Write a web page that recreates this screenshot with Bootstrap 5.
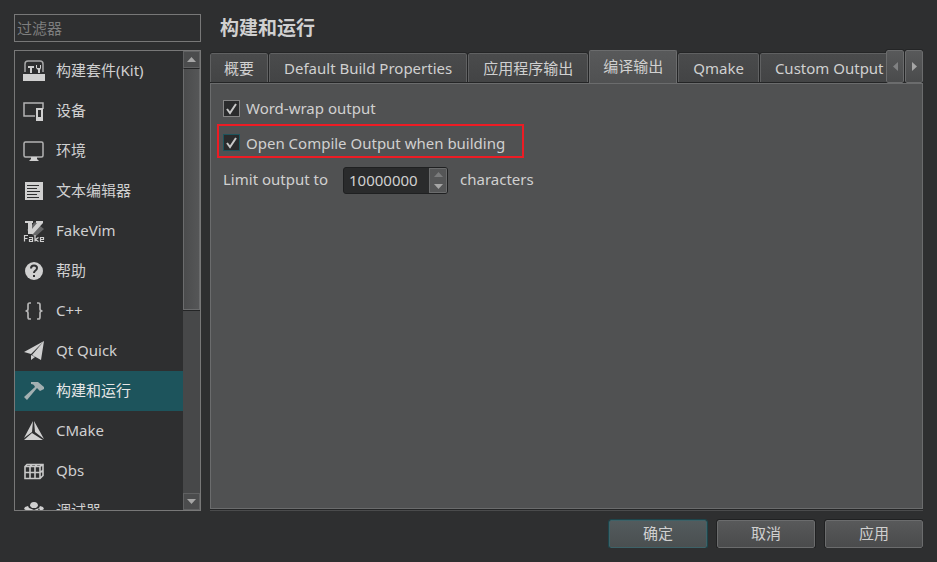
<!DOCTYPE html>
<html lang="zh-CN">
<head>
<meta charset="utf-8">
<meta name="viewport" content="width=device-width, initial-scale=1">
<title>构建和运行</title>
<link href="https://cdn.jsdelivr.net/npm/bootstrap@5.3.0/dist/css/bootstrap.min.css" rel="stylesheet">
<style>
:root { --ink: #d0d0d0; --edge: #6b6c6d; --dark: #242526; }
body { background: #2e2f30; color: var(--ink); font: 15px/20px "Noto Sans", "Noto Sans CJK SC", sans-serif; }
.prefs { padding: 14px; gap: 9px; }
.side { width: 187px; padding-bottom: 37px; }
.filter { height: 28px; padding: 0 2px; background: #2e2f30; border: 1px solid #787878; border-radius: 0; color: var(--ink); font-size: 15px; }
.filter:focus { background: #2e2f30; color: var(--ink); box-shadow: none; border-color: #1d545c; }
.filter::placeholder { color: #7e7e7e; }
.cats { border: 1px solid #787878; }
.cat { height: 40px; padding: 0 8px; gap: 11px; color: var(--ink); text-decoration: none; white-space: nowrap; }
.cat span { padding-bottom: 2px; }
.cat:hover { color: #fff; }
.cat.active { background: #1d545c; color: #e6e6e6; }
.cat svg { width: 22px; height: 22px; fill: #d0d0d0; }
.cat.active svg { fill: #a3b0b2; }
.scroller { width: 17px; background: #474849; }
.scroller button { height: 17px; padding: 0; background: #4b4c4d; border: 1px solid #606162; }
.scroller .thumb { height: 57%; background: linear-gradient(90deg, #4b4c4d, #555657); border: 1px solid #6b6c6d; border-top-color: var(--dark); box-shadow: 0 1px var(--dark); }
.arrow { display: block; margin: auto; fill: #a6a6a6; }
h1 { font-size: 19px; line-height: 28px; font-weight: 700; margin: 0 0 8px; padding-left: 10px; }
.tabs { height: 33px; margin-bottom: -1px; position: relative; border: 0; }
.tabs .nav-link { flex: none; height: 29px; padding: 0 14px; margin: 0 0 1px; background: linear-gradient(#4a4b4c, #434445); color: var(--ink); border: 1px solid #606162; border-bottom: 0; border-radius: 2px 2px 0 0; outline: 1px solid var(--dark); outline-offset: 0; font-size: 15px; line-height: 20px; white-space: nowrap; }
.tabs .nav-item + .nav-item { margin-left: 1px; }
.tabs .nav-item:first-child .nav-link { padding: 0 13px; }
.tabs .nav-link.active { height: 33px; margin: 0; padding: 0 13px 2px; background: linear-gradient(#58595a, #505152); color: var(--ink); outline: 0; border-color: #6b6c6d; }
.tab-arrows button { width: 18px; height: 33px; padding: 0; background: linear-gradient(#58595a, #4a4b4c); border: 1px solid #6b6c6d; border-radius: 2px; outline: 1px solid var(--dark); }
.tab-arrows { gap: 1px; }
.pane { background: #505152; border: 1px solid var(--edge); padding: 11px 12px; margin-bottom: 3px; box-shadow: 0 1px var(--dark), 0 2px #4a4b4c; }
.option { height: 26px; gap: 6px; }
.option .form-check-input { width: 17px; height: 17px; margin: 0; border: 1px solid #858585; border-radius: 0; background-color: #2a2b2c; }
.option .form-check-input:checked { background-color: #2a2b2c; background-size: 15px 15px; background-image: url("data:image/svg+xml,%3Csvg xmlns='http://www.w3.org/2000/svg' viewBox='0 0 15 15'%3E%3Cpath d='M3 8l3 4L12 3' fill='none' stroke='%23c8c8c8' stroke-width='2'/%3E%3C/svg%3E"); }
.option.marked { align-self: flex-start; height: 34px; margin: 3px 0 9px -6px; padding: 3px 17px 0 4px; border: 2px solid #ed1c24; }
.option.marked .form-check-input { border-color: #1d545c; }
.limit > label, .limit > span { padding-bottom: 3px; }
.spin { width: 105px; height: 27px; margin: 0 12px 0 15px; background: #2a2b2c; border: 1px solid #1f2021; border-radius: 3px; overflow: hidden; }
.spin input { min-width: 0; padding: 0 0 1px 5px; background: transparent; color: var(--ink); border: 0; outline: 0; }
.spin .steps { width: 18px; background: #555657; border: 1px solid #6b6c6d; }
.spin .steps button { padding: 0; background: transparent; border: 0; }
.actions { gap: 10px; }
.action { width: 98px; height: 28px; padding: 0 0 2px; border: 1px solid #6b6c6d; border-radius: 2px; outline: 1px solid #202122; background: linear-gradient(#58595a, #4a4b4c); color: var(--ink); font-size: 15px; line-height: 20px; }
.action:hover { color: #fff; border-color: #858585; }
.action.main { border-color: #3d6268; outline-color: #1d454b; background: linear-gradient(#535b5d, #4a4f50); }
</style>
<script src="https://cdn.jsdelivr.net/npm/bootstrap@5.3.0/dist/js/bootstrap.bundle.min.js"></script>
</head>
<body>
<main class="prefs vh-100 d-flex">
  <aside class="side d-flex flex-column flex-shrink-0 gap-2">
    <input class="filter form-control flex-shrink-0" type="search" placeholder="过滤器" aria-label="过滤器">
    <div class="cats d-flex flex-fill overflow-hidden">
      <nav class="flex-fill overflow-hidden" aria-label="类别">
        <a class="cat d-flex align-items-center" href="#"><svg viewBox="0 0 22 22"><path d="M2 12V4q0-3 3-3h12q3 0 3 3v8" fill="none" stroke="#a8a8a8" stroke-width="1.5"/><path d="M0 14h22v7H0zM5 6h6v2H9v5H7V8H5zM13 5h1v3h3V5h1v3l-1 2v3h-2v-3l-2-2z"/></svg><span>构建套件(Kit)</span></a>
        <a class="cat d-flex align-items-center" href="#"><svg viewBox="0 0 22 22"><path d="M12 16H1V3h19v6" fill="none" stroke="#b4b4b4" stroke-width="1.5"/><path d="M13 8h7v13h-7zm2 2v7h3v-7z" fill-rule="evenodd"/></svg><span>设备</span></a>
        <a class="cat d-flex align-items-center" href="#"><svg viewBox="0 0 22 22"><rect x="1" y="2" width="19" height="15" rx="1.5" fill="none" stroke="#b4b4b4" stroke-width="1.5"/><path d="M8 17h6v2l2 2H6l2-2z"/></svg><span>环境</span></a>
        <a class="cat d-flex align-items-center" href="#"><svg viewBox="0 0 22 22"><path d="M2 2h18v18H2z"/><path d="M4 5.500h12M4 8.500h10M4 11.500h13M4 14.500h10M4 17.500h12" stroke="#2e2f30" stroke-width="1.2"/></svg><span>文本编辑器</span></a>
        <a class="cat d-flex align-items-center" href="#"><svg viewBox="0 0 22 22"><path d="M12 2l9 7-9 8-8-7z" fill="#666768"/><path d="M2 1h8v2H9v6l5-6h-1V1h7v2L10 14H5V3H2z"/><path d="M1.500 21.500v-6h3.500M1.500 18.500h3M6 17.500h3.500v4H6.500v-2h3M12 15v6.500m3.500-4-3 2 3 2M17.500 19.500h3v-2h-3v4h3.500" fill="none" stroke="#d0d0d0" stroke-width="1.2"/></svg><span>FakeVim</span></a>
        <a class="cat d-flex align-items-center" href="#"><svg viewBox="0 0 22 22"><circle cx="11" cy="11" r="9"/><path d="M8 8.500q0-3 3-3t3 2.500q0 1.500-1.500 2.500T11 13m0 2v2" fill="none" stroke="#2e2f30" stroke-width="2"/></svg><span>帮助</span></a>
        <a class="cat d-flex align-items-center" href="#"><svg viewBox="0 0 22 22"><path d="M8 3H6.500Q5 3 5 5v4q0 2-2.500 2Q5 11 5 13v4q0 2 1.500 2H8M14 3h1.500Q17 3 17 5v4q0 2 2.500 2-2.500 0-2.500 2v4q0 2-1.500 2H14" fill="none" stroke="#b4b4b4" stroke-width="1.7"/></svg><span>C++</span></a>
        <a class="cat d-flex align-items-center" href="#"><svg viewBox="0 0 22 22"><path d="M21 1L1 12l7 2zM21 1L9 15l9 5zM8 15v5l4-3z"/></svg><span>Qt Quick</span></a>
        <a class="cat active d-flex align-items-center" href="#" aria-current="page"><svg viewBox="0 0 22 22"><path d="M8 2h7l6 5v2l-4 2-3-3L4 20l-3-3L12 7q-1-3-4-3z"/></svg><span>构建和运行</span></a>
        <a class="cat d-flex align-items-center" href="#"><svg viewBox="0 0 22 22"><path d="M10 1L1 18l8-6zM11 1l1 11 9 7zM9 13l-8 7h19z"/></svg><span>CMake</span></a>
        <a class="cat d-flex align-items-center" href="#"><svg viewBox="0 0 22 22"><path d="M2 6.500l2-2h16v11l-3 3H2zM2 6.500h15l3-2M17 6.500v12M7 6.500v12M12 6.500v12M2 12.500h15l3-2M7 6.500l2-2m3 2 2-2" fill="none" stroke="#c8c8c8" stroke-width="1.6"/></svg><span>Qbs</span></a>
        <a class="cat d-flex align-items-center" href="#"><svg viewBox="0 0 22 22"><path d="M7 6q0-4 4-4t4 4l-2 2H9zM6 8l5 2 5-2 2 5v5l-7 4-7-4v-5zM2 7l3-1 2 4-1 2-5-3zM20 7l-3-1-2 4 1 2 5-3z"/></svg><span>调试器</span></a>
      </nav>
      <div class="scroller d-flex flex-column flex-shrink-0">
        <button type="button" aria-label="向上滚动"><svg class="arrow" width="9" height="5"><path d="M0 5L4.500 0 9 5z"/></svg></button>
        <div class="flex-fill"><div class="thumb"></div></div>
        <button type="button" aria-label="向下滚动"><svg class="arrow" width="9" height="5"><path d="M0 0h9L4.500 5z"/></svg></button>
      </div>
    </div>
  </aside>
  <section class="d-flex flex-column flex-fill overflow-hidden">
    <h1>构建和运行</h1>
    <div class="d-flex">
      <ul class="tabs nav nav-tabs flex-fill flex-nowrap align-items-end overflow-hidden" role="tablist">
        <li class="nav-item" role="presentation"><button class="nav-link" type="button" role="tab">概要</button></li>
        <li class="nav-item" role="presentation"><button class="nav-link" type="button" role="tab">Default Build Properties</button></li>
        <li class="nav-item" role="presentation"><button class="nav-link" type="button" role="tab">应用程序输出</button></li>
        <li class="nav-item" role="presentation"><button class="nav-link active" type="button" role="tab" aria-selected="true">编译输出</button></li>
        <li class="nav-item" role="presentation"><button class="nav-link" type="button" role="tab">Qmake</button></li>
        <li class="nav-item" role="presentation"><button class="nav-link" type="button" role="tab">Custom Output</button></li>
      </ul>
      <div class="tab-arrows d-flex flex-shrink-0">
        <button type="button" aria-label="向左"><svg class="arrow" width="5" height="9"><path d="M5 0v9L0 4.500z" fill="#808182"/></svg></button>
        <button type="button" aria-label="向右"><svg class="arrow" width="5" height="9"><path d="M0 0v9l5-4.500z"/></svg></button>
      </div>
    </div>
    <form class="pane d-flex flex-column flex-fill">
      <div class="option d-flex align-items-center"><input class="form-check-input" type="checkbox" id="wrap" checked><label for="wrap">Word-wrap output</label></div>
      <div class="option marked d-flex align-items-center"><input class="form-check-input" type="checkbox" id="open" checked><label for="open">Open Compile Output when building</label></div>
      <div class="limit d-flex align-items-center">
        <label for="limit">Limit output to</label>
        <div class="spin d-flex">
          <input class="flex-fill" type="text" inputmode="numeric" id="limit" value="10000000">
          <div class="steps d-flex flex-column flex-shrink-0">
            <button class="flex-fill d-flex" type="button" aria-label="增加"><svg class="arrow" width="9" height="5"><path d="M0 5L4.500 0 9 5z" fill="#7a7b7c"/></svg></button>
            <button class="flex-fill d-flex" type="button" aria-label="减少"><svg class="arrow" width="9" height="5"><path d="M0 0h9L4.500 5z"/></svg></button>
          </div>
        </div>
        <span>characters</span>
      </div>
    </form>
    <div class="actions d-flex justify-content-end pt-2">
      <button class="action main btn" type="button">确定</button>
      <button class="action btn" type="button">取消</button>
      <button class="action btn" type="button">应用</button>
    </div>
  </section>
</main>
</body>
</html>
